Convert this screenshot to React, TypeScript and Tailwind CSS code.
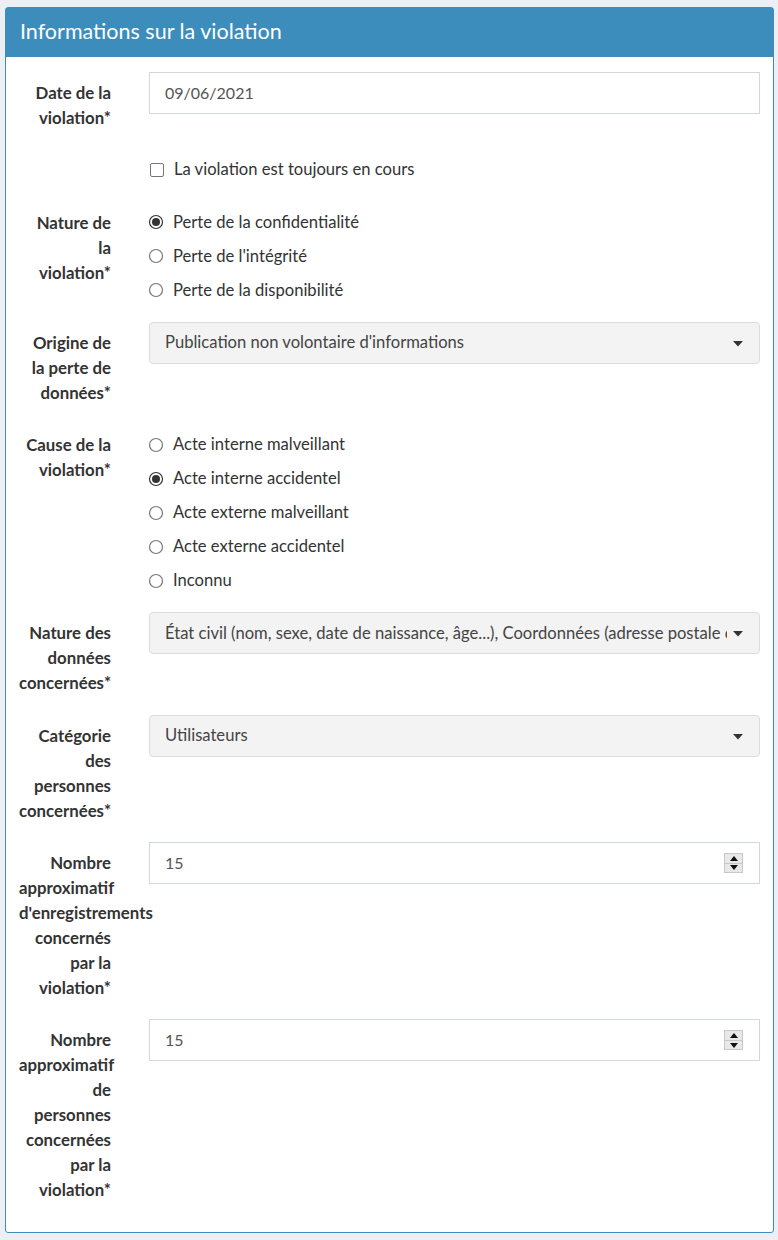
import React from "react";

function Label({ lines }: { lines: string[] }) {
  return (
    <div className="w-[120px] shrink-0 pl-[13px] pr-[15px] pt-[8px] text-right font-bold text-[16.8px] leading-[25px] text-[#333]">
      {lines.map((l, i) => (
        <div key={i} className="whitespace-nowrap">
          {l}
        </div>
      ))}
    </div>
  );
}

function Row({ lines, children }: { lines: string[]; children?: React.ReactNode }) {
  return (
    <div className="flex">
      <Label lines={lines} />
      <div className="flex-1 min-w-0 pl-[23px] pr-[13px]">{children}</div>
    </div>
  );
}

function Radio({ checked, label }: { checked?: boolean; label: string }) {
  return (
    <div className="flex h-[25px] items-center">
      <svg width="16" height="16" viewBox="0 0 16 16" className="ml-[-1px] mr-[9px] shrink-0">
        <circle cx="8" cy="8" r="6.5" fill="white" stroke={checked ? "#333" : "#767676"} strokeWidth="1.2" />
        {checked && <circle cx="8" cy="8" r="4" fill="#333" />}
      </svg>
      <span className="text-[16.6px] text-[#333] whitespace-nowrap">{label}</span>
    </div>
  );
}

function Radios({ items, checked }: { items: string[]; checked: number }) {
  return (
    <div className="flex flex-col gap-[9px] pt-[8px]">
      {items.map((it, i) => (
        <Radio key={i} label={it} checked={i === checked} />
      ))}
    </div>
  );
}

function Select({ value }: { value: string }) {
  return (
    <div className="relative flex h-[42px] items-center rounded-[4px] border border-[#dcdcdc] bg-[#f3f3f3] pl-[15px] pr-[32px]">
      <span className="overflow-hidden whitespace-nowrap text-[16.6px] text-[#444]">{value}</span>
      <svg width="10" height="6" viewBox="0 0 10 6" className="absolute right-[16px] top-[18px]">
        <path d="M0 0 H10 L5 5.5 Z" fill="#333" />
      </svg>
    </div>
  );
}

function TextInput({ value, spinner }: { value: string; spinner?: boolean }) {
  return (
    <div className="relative flex h-[42px] items-center border border-[#d2d6de] bg-white pl-[15px]">
      <span className="text-[16px] text-[#555]">{value}</span>
      {spinner && (
        <div className="absolute right-[16px] top-[10px] flex h-[20px] w-[19px] flex-col border border-[#c8c8c8] bg-[#e8e8e8]">
          <div className="flex flex-1 items-center justify-center border-b border-[#c8c8c8]">
            <svg width="8" height="5" viewBox="0 0 8 5">
              <path d="M0 5 L4 0 L8 5 Z" fill="#111" />
            </svg>
          </div>
          <div className="flex flex-1 items-center justify-center">
            <svg width="8" height="5" viewBox="0 0 8 5">
              <path d="M0 0 L8 0 L4 5 Z" fill="#111" />
            </svg>
          </div>
        </div>
      )}
    </div>
  );
}

export default function App() {
  return (
    <div className="min-h-[1240px] bg-[#ecf0f5] pt-[7px] pl-[5px] pr-[4px] font-[Lato,sans-serif]">
      <div className="rounded-[3px] border border-[#3c8dbc] bg-white">
        <div className="flex h-[49px] items-center bg-[#3c8dbc] pl-[14px] pb-[2px]">
          <h3 className="text-[21.5px] text-white">Informations sur la violation</h3>
        </div>
        <div className="flex flex-col gap-[19.3px] pt-[15px] pb-[30px]">
          <Row lines={["Date de la", "violation*"]}>
            <TextInput value="09/06/2021" />
          </Row>
          <Row lines={[""]}>
            <div className="flex h-[25px] items-center mt-[8px]">
              <div className="mr-[10px] ml-[1px] h-[14px] w-[14px] rounded-[2px] border border-[#767676] bg-white" />
              <span className="text-[16.6px] text-[#333]">La violation est toujours en cours</span>
            </div>
          </Row>
          <Row lines={["Nature de", "la", "violation*"]}>
            <Radios
              items={["Perte de la confidentialité", "Perte de l'intégrité", "Perte de la disponibilité"]}
              checked={0}
            />
          </Row>
          <Row lines={["Origine de", "la perte de", "données*"]}>
            <Select value="Publication non volontaire d'informations" />
          </Row>
          <Row lines={["Cause de la", "violation*"]}>
            <Radios
              items={[
                "Acte interne malveillant",
                "Acte interne accidentel",
                "Acte externe malveillant",
                "Acte externe accidentel",
                "Inconnu",
              ]}
              checked={1}
            />
          </Row>
          <Row lines={["Nature des", "données", "concernées*"]}>
            <Select value="État civil (nom, sexe, date de naissance, âge...), Coordonnées (adresse postale ou électronique, numéros de téléphone)" />
          </Row>
          <Row lines={["Catégorie", "des", "personnes", "concernées*"]}>
            <Select value="Utilisateurs" />
          </Row>
          <Row lines={["Nombre", "approximatif", "d'enregistrements", "concernés", "par la", "violation*"]}>
            <TextInput value="15" spinner />
          </Row>
          <Row lines={["Nombre", "approximatif", "de", "personnes", "concernées", "par la", "violation*"]}>
            <TextInput value="15" spinner />
          </Row>
        </div>
      </div>
    </div>
  );
}
